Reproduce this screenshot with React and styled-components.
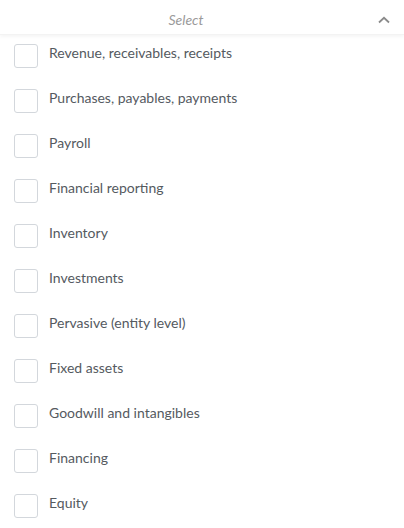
import React from 'react'
import styled, { createGlobalStyle } from 'styled-components'

const GlobalStyle = createGlobalStyle`
    body {
        margin: 0;
        background: #ffffff;
        font-family: Lato, "Open Sans", sans-serif;
    }
`;

const options = [
    'Revenue, receivables, receipts',
    'Purchases, payables, payments',
    'Payroll',
    'Financial reporting',
    'Inventory',
    'Investments',
    'Pervasive (entity level)',
    'Fixed assets',
    'Goodwill and intangibles',
    'Financing',
    'Equity',
]

function App() {
    return (
        <Dropdown>
            <GlobalStyle />
            <Header>
                <Placeholder>Select</Placeholder>
                <Chevron viewBox="0 0 12 8">
                    <path d="M1 6.5 L6 1.8 L11 6.5" />
                </Chevron>
            </Header>
            <List>
                {options.map((label) => (
                    <Option key={label}>
                        <Box />
                        <Label>{label}</Label>
                    </Option>
                ))}
            </List>
        </Dropdown>
    )
}

export default App

const Dropdown = styled.div`
    width: 404px;
    background: #fff;
`;

const Header = styled.div`
    position: relative;
    height: 34px;
    display: flex;
    align-items: center;
    justify-content: center;
    box-shadow: 0 2px 3px rgba(0, 0, 0, 0.04);
    border-bottom: 1px solid #f3f3f3;
`;

const Placeholder = styled.span`
    font-style: italic;
    font-size: 14px;
    line-height: 18px;
    color: #9a9a9a;
    margin-left: -32px;
    margin-top: 6px;
`;

const Chevron = styled.svg`
    position: absolute;
    right: 14px;
    top: 16px;
    width: 12px;
    height: 8px;
    fill: none;
    stroke: #8a8a8a;
    stroke-width: 1.8;
`;

const List = styled.div`
    display: flex;
    flex-direction: column;
    padding-top: 9px;
`;

const Option = styled.label`
    display: flex;
    align-items: flex-start;
    height: 45px;
    padding-left: 14px;
    gap: 11px;
    cursor: pointer;
`;

const Box = styled.span`
    width: 22px;
    height: 22px;
    border: 1px solid #d3d7dc;
    border-radius: 3px;
    background: #fff;
    flex-shrink: 0;
`;

const Label = styled.span`
    font-size: 14px;
    line-height: 18px;
    color: #555a5f;
`;
